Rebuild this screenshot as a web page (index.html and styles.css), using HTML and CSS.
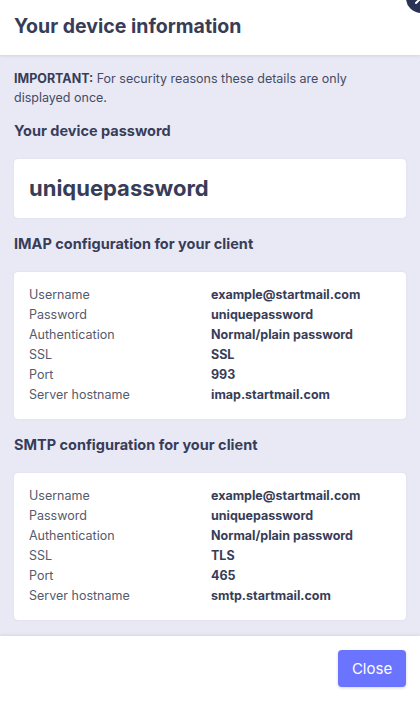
FILE: index.html
```html
<!DOCTYPE html>
<html lang="en">
    <head>
        <meta charset="UTF-8" />
        <meta name="viewport" content="width=device-width, initial-scale=1.0" />
        <title>Your device information</title>
        <link rel="stylesheet" href="styles.css">
    </head>
    <body>
        <div class="modal">
            <button class="dismiss" aria-label="Dismiss">
                <svg width="30" height="30" viewBox="0 0 30 30">
                    <path d="M10 10 L20 20 M20 10 L10 20" stroke="#fff" stroke-width="2" stroke-linecap="round" fill="none" />
                </svg>
            </button>

            <div class="modal-header">
                <h1>Your device information</h1>
            </div>

            <div class="modal-body">
                <p class="notice"><strong>IMPORTANT:</strong> For security reasons these details are only displayed once.</p>

                <h2>Your device password</h2>
                <div class="card password">uniquepassword</div>

                <h2>IMAP configuration for your client</h2>
                <div class="card">
                    <dl class="config">
                        <dt>Username</dt><dd>example@startmail.com</dd>
                        <dt>Password</dt><dd>uniquepassword</dd>
                        <dt>Authentication</dt><dd>Normal/plain password</dd>
                        <dt>SSL</dt><dd>SSL</dd>
                        <dt>Port</dt><dd>993</dd>
                        <dt>Server hostname</dt><dd>imap.startmail.com</dd>
                    </dl>
                </div>

                <h2>SMTP configuration for your client</h2>
                <div class="card">
                    <dl class="config">
                        <dt>Username</dt><dd>example@startmail.com</dd>
                        <dt>Password</dt><dd>uniquepassword</dd>
                        <dt>Authentication</dt><dd>Normal/plain password</dd>
                        <dt>SSL</dt><dd>TLS</dd>
                        <dt>Port</dt><dd>465</dd>
                        <dt>Server hostname</dt><dd>smtp.startmail.com</dd>
                    </dl>
                </div>
            </div>

            <div class="modal-footer">
                <button class="btn-primary">Close</button>
            </div>
        </div>
    </body>
</html>
```

FILE: styles.css
```css
html, body {
    margin: 0;
    padding: 0;
    background-color: #fff;
}

body {
    font-family: Inter, "Noto Sans", sans-serif;
    color: #373d58;
}

.modal {
    position: relative;
    width: 420px;
    height: 701px;
    display: flex;
    flex-direction: column;
    overflow: hidden;
}

/* Round dismiss button, mostly cut off by the viewport */
.dismiss {
    position: absolute;
    top: -17px;
    right: -16px;
    width: 30px;
    height: 30px;
    padding: 0;
    border: 0;
    border-radius: 50%;
    background-color: #2a3255;
    z-index: 2;
}

.dismiss svg {
    display: block;
}

.modal-header {
    height: 55px;
    box-sizing: border-box;
    flex-shrink: 0;
    display: flex;
    align-items: center;
    padding: 0 14px 3px;
    background-color: #fff;
    box-shadow: 0 1px 3px rgba(40, 44, 90, 0.12);
    z-index: 1;
}

.modal-header h1 {
    margin: 0;
    font-size: 19.5px;
    font-weight: 700;
}

.modal-body {
    flex-grow: 1;
    min-height: 0;
    overflow: hidden;
    padding: 14px;
    background-color: #e9e9f6;
}

.notice {
    margin: 0 0 14px;
    font-size: 12.5px;
    line-height: 19px;
    color: #464b63;
}

.notice strong {
    font-weight: 700;
    color: #373d58;
}

h2 {
    margin: 0 0 18px;
    font-size: 14.5px;
    font-weight: 700;
    line-height: 20px;
}

.card {
    background-color: #fff;
    border-radius: 4px;
    box-shadow: 0 0 2px rgba(40, 44, 90, 0.1);
    padding: 13px 15px 14px;
    margin-bottom: 16px;
}

.card:last-child {
    margin-bottom: 0;
}

.card.password {
    height: 59px;
    box-sizing: border-box;
    display: flex;
    align-items: center;
    padding: 0 15px 2px;
    font-size: 22px;
    font-weight: 700;
}

.config {
    display: grid;
    grid-template-columns: 182px 1fr;
    margin: 0;
    font-size: 12.5px;
    line-height: 20px;
}

.config dt {
    color: #555a6d;
}

.config dd {
    margin: 0;
    font-weight: 700;
}

.modal-footer {
    height: 65px;
    box-sizing: border-box;
    flex-shrink: 0;
    display: flex;
    align-items: center;
    justify-content: flex-end;
    padding: 0 14px;
    background-color: #fff;
    box-shadow: 0 -1px 3px rgba(40, 44, 90, 0.1);
}

.btn-primary {
    width: 68px;
    height: 37px;
    border: 0;
    border-radius: 4px;
    background-color: #6a74ff;
    color: #fff;
    font-family: inherit;
    font-size: 15px;
    box-shadow: 0 1px 3px rgba(40, 44, 90, 0.2);
}
```
